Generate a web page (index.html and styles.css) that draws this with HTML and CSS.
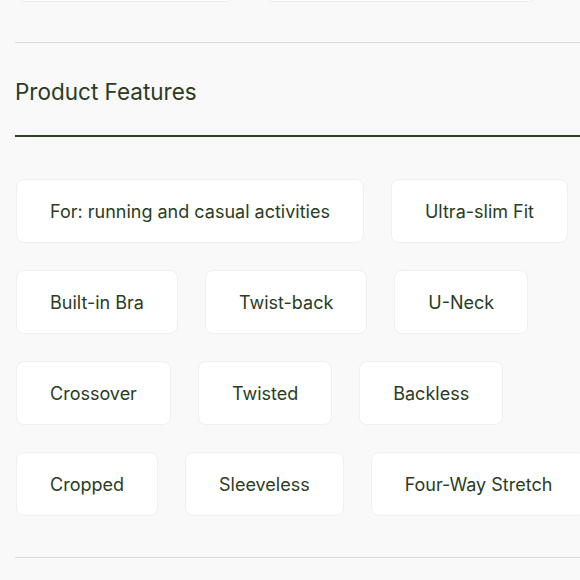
FILE: index.html
```html
<!DOCTYPE html>
<html lang="en">
<head>
<meta charset="utf-8">
<title>Product Features</title>
<link rel="stylesheet" href="styles.css">
</head>
<body>
<div class="page">
  <div class="prev-row">
    <div class="prev-card prev-card-a"></div>
    <div class="prev-card prev-card-b"></div>
  </div>
  <hr class="divider divider-top">
  <section class="features">
    <h2 class="features-title">Product Features</h2>
    <ul class="chips">
      <li class="chip">For: running and casual activities</li>
      <li class="chip">Ultra-slim Fit</li>
      <li class="chip">Built-in Bra</li>
      <li class="chip">Twist-back</li>
      <li class="chip">U-Neck</li>
      <li class="chip">Crossover</li>
      <li class="chip">Twisted</li>
      <li class="chip">Backless</li>
      <li class="chip">Cropped</li>
      <li class="chip">Sleeveless</li>
      <li class="chip">Four-Way Stretch</li>
    </ul>
  </section>
  <hr class="divider divider-bottom">
</div>
</body>
</html>
```
FILE: styles.css
```css
html, body {
  margin: 0;
  padding: 0;
  overflow: hidden;
  background: #f9f9f9;
}

body {
  font-family: Inter, "Noto Sans", sans-serif;
  color: #2a3c23;
}

.page {
  width: 620px;
  padding-left: 15px;
}

.prev-row {
  display: flex;
  gap: 31px;
  height: 40px;
  margin-top: -38px;
  padding-left: 2px;
}

.prev-card {
  height: 38px;
  background: #ffffff;
  border: 1px solid #eeeeee;
  border-radius: 8px;
}

.prev-card-a { width: 215px; }
.prev-card-b { width: 270px; }

.divider {
  margin: 0;
  border: 0;
  height: 1px;
  background: #dadada;
}

.divider-top {
  margin-top: 40px;
}

.features {
  display: flex;
  flex-direction: column;
}

.features-title {
  margin: 34px 0 0;
  font-size: 22.5px;
  line-height: 30px;
  font-weight: 400;
  color: #2a3c23;
  padding-bottom: 28px;
  border-bottom: 2px solid #2d4526;
}

.chips {
  list-style: none;
  margin: 42px 0 0;
  padding: 0 0 0 1px;
  display: flex;
  flex-wrap: wrap;
  column-gap: 27px;
  row-gap: 27px;
}

.chip {
  background: #ffffff;
  border: 1px solid #f0f0f0;
  border-radius: 8px;
  padding: 21px 33px 19px;
  font-size: 18px;
  line-height: 22px;
  white-space: nowrap;
  color: #2a3c23;
}

.divider-bottom {
  margin-top: 41px;
}
```
